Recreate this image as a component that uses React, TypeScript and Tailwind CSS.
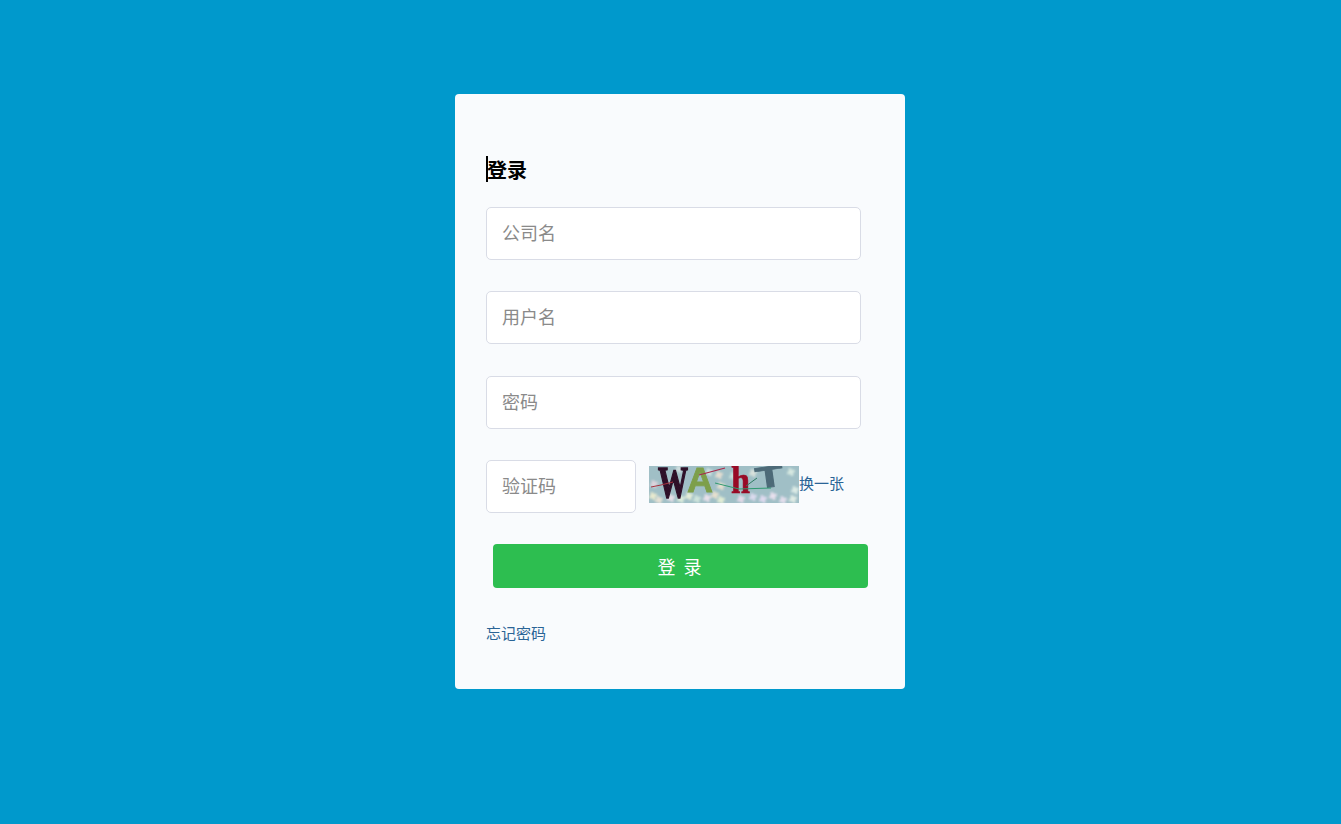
import React from "react";

const font = { fontFamily: '"Noto Sans CJK SC", "Liberation Sans", sans-serif' };

function Field({ placeholder, className }: { placeholder: string; className: string }) {
  return (
    <input
      placeholder={placeholder}
      className={`block h-[53px] rounded-[5px] border border-[#d9dce6] bg-white pl-[15px] pr-[15px] pb-[4px] text-[18px] text-[#333] outline-none placeholder:text-[#8a8a8a] ${className}`}
    />
  );
}

function Captcha() {
  const flowers = [
    [4, 30, "#f6f2d0"], [10, 34, "#f4e8d8"], [22, 32, "#f6e6ef"], [32, 33, "#e8f6e0"], [40, 30, "#f4f8dc"], [48, 33, "#d8ece0"], [58, 32, "#f8e8f2"],
    [66, 29, "#f4e6d0"], [72, 34, "#eef6d8"], [84, 10, "#cfe8e0"], [92, 33, "#f3dff0"], [104, 31, "#e6e0f5"],
    [114, 33, "#ece0f8"], [124, 30, "#f5e6f5"], [134, 34, "#f0e4f4"], [142, 6, "#e0f0e6"], [146, 24, "#e8f4ec"], [144, 33, "#eef6ec"],
    [72, 20, "#f4e6d0"], [70, 9, "#f2e4d4"], [60, 6, "#d8ece8"], [5, 18, "#e8d8e0"], [30, 3, "#d8e4e4"], [104, 7, "#e4e8e0"],
  ] as [number, number, string][];
  return (
    <svg width="150" height="37" viewBox="0 0 150 37" className="block shrink-0 bg-[#a0bfc6]">
      <g className="blur-[0.8px]" opacity="0.85">
        {flowers.map(([x, y, c], i) => (
          <g key={i} fill={c}>
            <circle cx={x} cy={y} r="2.4" />
            <circle cx={x - 2.5} cy={y + 1} r="1.6" />
            <circle cx={x + 2.5} cy={y - 1} r="1.6" />
            <circle cx={x + 1} cy={y + 2.5} r="1.6" />
            <circle cx={x - 1} cy={y - 2.5} r="1.6" />
          </g>
        ))}
      </g>
      <g className="blur-[0.4px]">
        <text x="9" y="31" fontFamily="Liberation Serif" fontWeight="700" fontSize="44" fill="#2e1028" stroke="#2e1028" strokeWidth="1.6" textLength="30" lengthAdjust="spacingAndGlyphs">W</text>
        <text x="38" y="26" fontFamily="Liberation Sans" fontWeight="700" fontSize="35" fill="#7d9f4a" stroke="#7d9f4a" strokeWidth="0.8" textLength="26" lengthAdjust="spacingAndGlyphs">A</text>
        <text x="82" y="27" fontFamily="Liberation Serif" fontWeight="700" fontSize="37" fill="#980a26" stroke="#980a26" strokeWidth="0.6" textLength="19" lengthAdjust="spacingAndGlyphs">h</text>
        <text x="108" y="23" fontFamily="Liberation Sans" fontWeight="700" fontSize="30" fill="#4d6a78" stroke="#4d6a78" strokeWidth="0.8" transform="rotate(-8 108 23)" textLength="28" lengthAdjust="spacingAndGlyphs">T</text>
        <path d="M2 21 L12 19 L24 16" stroke="#a8323f" strokeWidth="1" fill="none" />
        <path d="M50 9 L76 2" stroke="#a8284a" strokeWidth="1.2" fill="none" />
        <path d="M66 17 L90 23 L122 22" stroke="#2f9a70" strokeWidth="1" fill="none" />
        <path d="M97 20 L108 12" stroke="#2f7a60" strokeWidth="1" fill="none" />
      </g>
    </svg>
  );
}

export default function App() {
  return (
    <div className="flex min-h-screen justify-center bg-[#0099cc] pt-[94px] pl-[19px]" style={font}>
      <div className="h-[595px] w-[450px] rounded-[4px] bg-[#f9fbfd] pl-[31px] pt-[62px]">
        <h1 className="h-[26px] border-l-2 border-black text-[20px] font-bold leading-[28px] text-black -indent-[1px]">登录</h1>
        <Field placeholder="公司名" className="mt-[25px] w-[375px]" />
        <Field placeholder="用户名" className="mt-[31px] w-[375px]" />
        <Field placeholder="密码" className="mt-[32px] w-[375px]" />
        <div className="mt-[31px] flex items-center">
          <Field placeholder="验证码" className="w-[150px]" />
          <div className="ml-[13px] -mt-[5px] flex items-center">
            <Captcha />
            <a className="pb-[2px] text-[15px] leading-[20px] text-[#2a6496]">换一张</a>
          </div>
        </div>
        <button className="mt-[31px] ml-[7px] block h-[44px] w-[375px] rounded-[4px] bg-[#2dbe50] text-[18px] tracking-[2px] text-white">登 录</button>
        <a className="mt-[35px] block text-[15px] leading-[20px] text-[#2a6496]">忘记密码</a>
      </div>
    </div>
  );
}
